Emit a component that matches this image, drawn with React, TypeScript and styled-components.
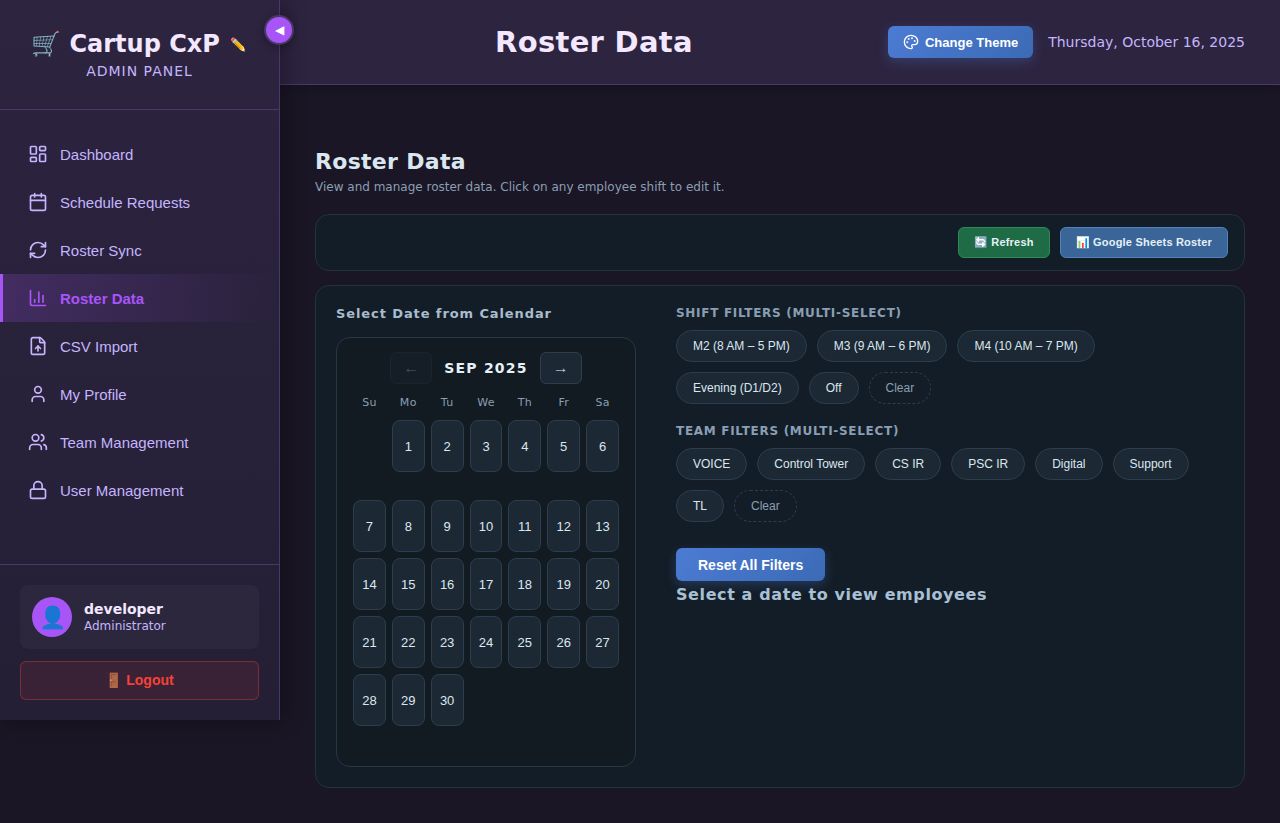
import React from "react";
import styled, { createGlobalStyle, css } from "styled-components";
import {
  Calendar,
  ChartColumn,
  FileUp,
  LayoutDashboard,
  Lock,
  Palette,
  RefreshCw,
  User,
  Users,
} from "lucide-react";

const uiFont = `"DejaVu Sans", Verdana, sans-serif`;
const controlFont = `"Liberation Sans", Arial, sans-serif`;

const GlobalStyle = createGlobalStyle`
  *, *::before, *::after { box-sizing: border-box; }
  body {
    margin: 0;
    background: #1a1625;
    color: #f3e8ff;
    font-family: ${uiFont};
    font-size: 16px;
  }
  h1, h2, h3, p, ul, fieldset { margin: 0; padding: 0; }
  button { font-family: ${controlFont}; cursor: pointer; }
`;

const Shell = styled.div`
  display: flex;
  align-items: flex-start;
  min-height: 100vh;
`;

const Sidebar = styled.aside`
  position: relative;
  z-index: 2;
  flex: 0 0 280px;
  display: flex;
  flex-direction: column;
  min-height: 720px;
  background: linear-gradient(180deg, #2d2440 0%, #241f35 100%);
  border-right: 1px solid #4a3868;
  box-shadow: 4px 0 20px rgba(0, 0, 0, 0.3);
`;

const CollapseButton = styled.button`
  position: absolute;
  top: 15px;
  right: -15px;
  width: 30px;
  height: 30px;
  padding: 0;
  border: 2px solid #4a3868;
  border-radius: 50%;
  background: #a855f7;
  color: #fff;
  font-size: 12px;
  box-shadow: 0 2px 8px rgba(0, 0, 0, 0.3);
`;

const Brand = styled.div`
  display: flex;
  flex-direction: column;
  align-items: center;
  height: 110px;
  padding: 30px 20px 0;
  border-bottom: 1px solid #4a3868;
`;

const BrandName = styled.div`
  display: flex;
  align-items: center;
  gap: 8px;
  font-size: 24px;
  font-weight: 700;
  line-height: 29px;
  white-space: nowrap;
`;

const EditButton = styled.button`
  padding: 2px;
  border: 0;
  background: none;
  font-size: 13px;
  line-height: 16px;
`;

const BrandSub = styled.div`
  margin-top: 4px;
  color: #c4b5fd;
  font-size: 14px;
  line-height: 16px;
  letter-spacing: 1px;
`;

const Nav = styled.nav`
  flex: 1;
  padding: 20px 0;
`;

const NavLink = styled.a<{ $active?: boolean }>`
  display: flex;
  align-items: center;
  gap: 12px;
  height: 48px;
  padding-left: 25px;
  border-left: 3px solid transparent;
  color: #c4b5fd;
  font-family: ${controlFont};
  font-size: 15px;
  text-decoration: none;
  ${(p) =>
    p.$active &&
    css`
      border-left-color: #a855f7;
      background: linear-gradient(90deg, rgba(168, 85, 247, 0.2), transparent);
      color: #a855f7;
      font-weight: 700;
    `}
`;

const SidebarFooter = styled.div`
  display: flex;
  flex-direction: column;
  gap: 12px;
  padding: 20px;
  border-top: 1px solid #4a3868;
`;

const UserCard = styled.div`
  display: flex;
  align-items: center;
  gap: 12px;
  padding: 12px;
  border-radius: 8px;
  background: rgba(255, 255, 255, 0.03);
`;

const Avatar = styled.div`
  display: flex;
  align-items: center;
  justify-content: center;
  width: 40px;
  height: 40px;
  border-radius: 50%;
  background: #a855f7;
  font-size: 22px;
`;

const UserName = styled.div`
  font-size: 14px;
  font-weight: 700;
  line-height: 17px;
`;

const UserRole = styled.div`
  color: #c4b5fd;
  font-size: 12px;
  line-height: 16px;
`;

const LogoutButton = styled.button`
  height: 39px;
  padding: 0 6px 2px;
  border: 1px solid rgba(244, 67, 54, 0.35);
  border-radius: 6px;
  background: rgba(244, 67, 54, 0.1);
  color: #f44336;
  font-size: 14px;
  font-weight: 700;
`;

const Main = styled.main`
  flex: 1;
  min-width: 0;
`;

const TopBar = styled.header`
  display: flex;
  align-items: center;
  gap: 15px;
  height: 85px;
  padding: 0 35px;
  border-bottom: 1px solid #4a3868;
  background: #2d2440;
  box-shadow: 0 2px 10px rgba(0, 0, 0, 0.2);
`;

const PageTitle = styled.h1`
  flex: 1;
  font-size: 29px;
  line-height: 34px;
  letter-spacing: 0.3px;
  text-align: center;
`;

const TopActions = styled.div`
  display: flex;
  align-items: center;
  gap: 15px;
  color: #c4b5fd;
  font-size: 14px;
  white-space: nowrap;
`;

const primary = css`
  border: 0;
  background: linear-gradient(135deg, #4c7bd4, #3b6bb5);
  box-shadow: 0 4px 12px rgba(76, 123, 212, 0.3);
  color: #fff;
  font-weight: 700;
`;

const ThemeButton = styled.button`
  ${primary}
  display: flex;
  align-items: center;
  gap: 6px;
  height: 32px;
  padding: 0 15px;
  border-radius: 6px;
  font-size: 13px;
`;

const Content = styled.div`
  display: flex;
  flex-direction: column;
  padding: 64px 35px 35px;
`;

const SectionTitle = styled.h2`
  color: #dbe7f0;
  font-size: 22px;
  line-height: 25px;
  letter-spacing: 0.3px;
`;

const SectionHint = styled.p`
  margin-top: 5px;
  color: #8a9fb3;
  font-size: 12px;
  line-height: 16px;
`;

const panel = css`
  border: 1px solid #22343f;
  border-radius: 14px;
  background: #131d27;
`;

const Toolbar = styled.div`
  ${panel}
  display: flex;
  justify-content: flex-end;
  gap: 10px;
  margin-top: 19px;
  padding: 12px 16px;
`;

const ToolButton = styled.button<{ $tone: "green" | "blue" }>`
  height: 31px;
  padding: 0 15px;
  border: 1px solid ${(p) => (p.$tone === "green" ? "#2e8b57" : "#5580bb")};
  border-radius: 6px;
  background: ${(p) => (p.$tone === "green" ? "#1f6b45" : "#3a6599")};
  color: #e6f0f7;
  font-size: 11px;
  font-weight: 700;
  letter-spacing: 0.2px;
`;

const Board = styled.section`
  ${panel}
  display: grid;
  grid-template-columns: 300px minmax(0, 1fr);
  gap: 40px;
  margin-top: 14px;
  padding: 20px;
`;

const CalendarTitle = styled.h3`
  color: #a9bccd;
  font-size: 13px;
  line-height: 15px;
  letter-spacing: 0.9px;
`;

const CalendarCard = styled.div`
  height: 430px;
  margin-top: 16px;
  padding: 14px 16px;
  border: 1px solid #263845;
  border-radius: 14px;
  background: #121a22;
`;

const MonthRow = styled.div`
  display: flex;
  align-items: center;
  justify-content: center;
  gap: 12px;
`;

const MonthName = styled.span`
  color: #e6f0f7;
  font-size: 14px;
  font-weight: 700;
  letter-spacing: 1.2px;
`;

const ArrowButton = styled.button`
  width: 42px;
  height: 32px;
  padding: 0;
  border: 1px solid #2c3e4d;
  border-radius: 6px;
  background: #1c2833;
  color: #a9bccd;
  font-size: 16px;
  &:disabled { opacity: 0.3; cursor: default; }
`;

const Week = styled.div`
  display: grid;
  grid-template-columns: repeat(7, minmax(0, 1fr));
  gap: 6px;
`;

const Weekdays = styled(Week)`
  margin: 12px 0 11px;
  color: #8a9fb3;
  font-size: 11px;
  line-height: 13px;
  letter-spacing: 0.3px;
  text-align: center;
`;

const Days = styled(Week)`
  grid-template-rows: 74px;
  grid-auto-rows: 52px;
`;

const Day = styled.button`
  height: 52px;
  padding: 0;
  border: 1px solid #2c3e4d;
  border-radius: 8px;
  background: #1c2833;
  color: #dbe7f0;
  font-size: 13px;
`;

const FilterGroup = styled.fieldset`
  min-width: 0;
  margin-bottom: 20px;
  border: 0;
`;

const FilterLegend = styled.legend`
  padding: 0;
  margin-bottom: 10px;
  color: #8a9fb3;
  font-size: 12px;
  font-weight: 700;
  line-height: 14px;
  letter-spacing: 0.7px;
`;

const Chips = styled.div`
  display: flex;
  flex-wrap: wrap;
  gap: 10px;
`;

const Chip = styled.button<{ $clear?: boolean }>`
  height: 32px;
  padding: 0 16px;
  border: 1px ${(p) => (p.$clear ? "dashed" : "solid")} #2c3e4d;
  border-radius: 16px;
  background: ${(p) => (p.$clear ? "transparent" : "#1c2833")};
  color: ${(p) => (p.$clear ? "#8a9fb3" : "#dbe7f0")};
  font-size: 12px;
`;

const ResetButton = styled.button`
  ${primary}
  display: block;
  height: 33px;
  margin-top: 26px;
  padding: 0 22px;
  border-radius: 6px;
  font-size: 14px;
`;

const EmptyMessage = styled.h3`
  margin-top: 4px;
  color: #a9c0d4;
  font-size: 16px;
  line-height: 19px;
  letter-spacing: 0.6px;
`;

const navItems = [
  { label: "Dashboard", Icon: LayoutDashboard },
  { label: "Schedule Requests", Icon: Calendar },
  { label: "Roster Sync", Icon: RefreshCw },
  { label: "Roster Data", Icon: ChartColumn, active: true },
  { label: "CSV Import", Icon: FileUp },
  { label: "My Profile", Icon: User },
  { label: "Team Management", Icon: Users },
  { label: "User Management", Icon: Lock },
];

const weekdays = ["Su", "Mo", "Tu", "We", "Th", "Fr", "Sa"];
const days = Array.from({ length: 30 }, (_, i) => i + 1);
const shifts = ["M2 (8 AM – 5 PM)", "M3 (9 AM – 6 PM)", "M4 (10 AM – 7 PM)", "Evening (D1/D2)", "Off"];
const teams = ["VOICE", "Control Tower", "CS IR", "PSC IR", "Digital", "Support", "TL"];

function Filters({ title, options }: { title: string; options: string[] }) {
  return (
    <FilterGroup>
      <FilterLegend>{title}</FilterLegend>
      <Chips>
        {options.map((o) => (
          <Chip key={o} type="button">{o}</Chip>
        ))}
        <Chip type="button" $clear>Clear</Chip>
      </Chips>
    </FilterGroup>
  );
}

export default function App() {
  return (
    <>
      <GlobalStyle />
      <Shell>
        <Sidebar>
          <CollapseButton type="button" aria-label="Collapse sidebar">◀</CollapseButton>
          <Brand>
            <BrandName>
              <span>🛒 Cartup CxP</span>
              <EditButton type="button" aria-label="Edit name">✏️</EditButton>
            </BrandName>
            <BrandSub>ADMIN PANEL</BrandSub>
          </Brand>
          <Nav>
            {navItems.map(({ label, Icon, active }) => (
              <NavLink key={label} href="#" $active={active}>
                <Icon size={20} strokeWidth={2} />
                {label}
              </NavLink>
            ))}
          </Nav>
          <SidebarFooter>
            <UserCard>
              <Avatar>👤</Avatar>
              <div>
                <UserName>developer</UserName>
                <UserRole>Administrator</UserRole>
              </div>
            </UserCard>
            <LogoutButton type="button">🚪 Logout</LogoutButton>
          </SidebarFooter>
        </Sidebar>
        <Main>
          <TopBar>
            <PageTitle>Roster Data</PageTitle>
            <TopActions>
              <ThemeButton type="button">
                <Palette size={16} />
                Change Theme
              </ThemeButton>
              <span>Thursday, October 16, 2025</span>
            </TopActions>
          </TopBar>
          <Content>
            <SectionTitle>Roster Data</SectionTitle>
            <SectionHint>View and manage roster data. Click on any employee shift to edit it.</SectionHint>
            <Toolbar>
              <ToolButton type="button" $tone="green">🔄 Refresh</ToolButton>
              <ToolButton type="button" $tone="blue">📊 Google Sheets Roster</ToolButton>
            </Toolbar>
            <Board>
              <div>
                <CalendarTitle>Select Date from Calendar</CalendarTitle>
                <CalendarCard>
                  <MonthRow>
                    <ArrowButton type="button" aria-label="Previous month" disabled>←</ArrowButton>
                    <MonthName>SEP 2025</MonthName>
                    <ArrowButton type="button" aria-label="Next month">→</ArrowButton>
                  </MonthRow>
                  <Weekdays>
                    {weekdays.map((d) => (
                      <span key={d}>{d}</span>
                    ))}
                  </Weekdays>
                  <Days>
                    <span />
                    {days.map((d) => (
                      <Day key={d} type="button">{d}</Day>
                    ))}
                  </Days>
                </CalendarCard>
              </div>
              <div>
                <Filters title="SHIFT FILTERS (MULTI-SELECT)" options={shifts} />
                <Filters title="TEAM FILTERS (MULTI-SELECT)" options={teams} />
                <ResetButton type="button">Reset All Filters</ResetButton>
                <EmptyMessage>Select a date to view employees</EmptyMessage>
              </div>
            </Board>
          </Content>
        </Main>
      </Shell>
    </>
  );
}
